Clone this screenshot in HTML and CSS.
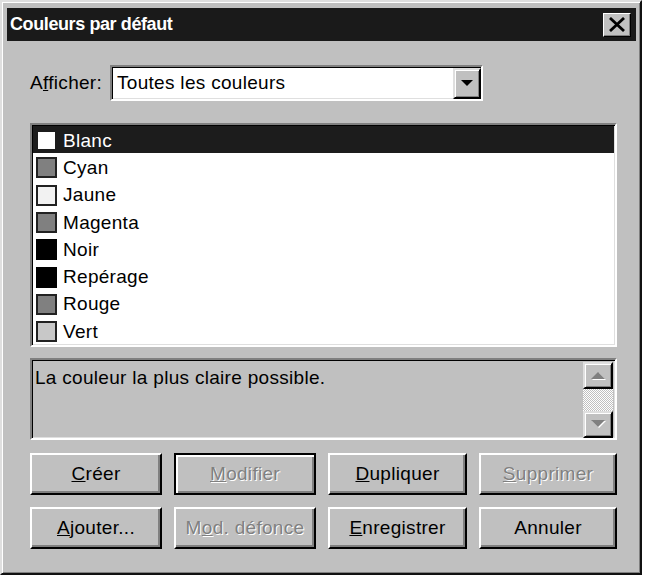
FILE: index.html
```html
<!DOCTYPE html>
<html lang="fr">
<head>
<meta charset="UTF-8">
<title>Couleurs par défaut</title>
<link rel="stylesheet" href="styles.css">
</head>
<body>

<div class="window">
    <div class="titlebar">
        <span class="title">Couleurs par défaut</span>
        <span class="close-btn">
            <svg width="18" height="15" viewBox="0 0 18 15"><path d="M2 1 L16 14 M16 1 L2 14" stroke="#000" stroke-width="2.8" fill="none"/></svg>
        </span>
    </div>

    <div class="content">
        <div class="show-row">
            <span class="label">A<u>f</u>ficher:</span>
            <div class="combo">
                <span class="combo-text">Toutes les couleurs</span>
                <span class="combo-btn">
                    <svg width="12" height="7" viewBox="0 0 12 7"><polygon points="0,0 12,0 6,6" fill="#000"/></svg>
                </span>
            </div>
        </div>

        <div class="listbox">
            <div class="item selected"><span class="swatch white"></span>Blanc</div>
            <div class="item"><span class="swatch mid"></span>Cyan</div>
            <div class="item"><span class="swatch pale"></span>Jaune</div>
            <div class="item"><span class="swatch mid"></span>Magenta</div>
            <div class="item"><span class="swatch black"></span>Noir</div>
            <div class="item"><span class="swatch black"></span>Repérage</div>
            <div class="item"><span class="swatch mid"></span>Rouge</div>
            <div class="item"><span class="swatch light"></span>Vert</div>
        </div>

        <div class="desc">
            <p class="desc-text">La couleur la plus claire possible.</p>
            <div class="scrollbar">
                <span class="scroll-btn">
                    <svg width="16" height="9" viewBox="0 0 16 9"><polygon points="1,8 15,8 8,1" fill="#fff" transform="translate(1,1)"/><polygon points="1,8 15,8 8,1" fill="#808080"/></svg>
                </span>
                <span class="scroll-track"></span>
                <span class="scroll-btn">
                    <svg width="16" height="9" viewBox="0 0 16 9"><polygon points="1,0 15,0 8,7" fill="#fff" transform="translate(1,1)"/><polygon points="1,0 15,0 8,7" fill="#808080"/></svg>
                </span>
            </div>
        </div>

        <div class="buttons">
            <button class="button"><u>C</u>réer</button>
            <button class="button default" disabled><u>M</u>odifier</button>
            <button class="button"><u>D</u>upliquer</button>
            <button class="button" disabled><u>S</u>upprimer</button>
            <button class="button"><u>A</u>jouter...</button>
            <button class="button" disabled>M<u>o</u>d. défonce</button>
            <button class="button"><u>E</u>nregistrer</button>
            <button class="button">Annuler</button>
        </div>
    </div>
</div>

</body>
</html>
```

FILE: styles.css
```css
body {
    margin: 0;
    background-color: #fff;
    font-family: 'Liberation Sans', Arial, sans-serif;
    font-size: 19px;
    letter-spacing: 0.3px;
    color: #000;
}

.window {
    width: 642px;
    height: 575px;
    box-sizing: border-box;
    background-color: #c0c0c0;
    border: 2px solid;
    border-color: #dfdfdf #111 #111 #dfdfdf;
    box-shadow: inset 1px 1px #fff, inset -1px -1px #808080;
    padding: 6px 4px 0 5px;
    display: flex;
    flex-direction: column;
}

.titlebar {
    height: 33px;
    background-color: #1a1a1a;
    display: flex;
    align-items: center;
    padding: 0 5px 0 3px;
}

.title {
    color: #fff;
    font-weight: bold;
    font-size: 18px;
    letter-spacing: -0.4px;
}

.close-btn {
    margin-left: auto;
    width: 28px;
    height: 24px;
    box-sizing: border-box;
    background-color: #c0c0c0;
    border: 1px solid;
    border-color: #fff #000 #000 #fff;
    box-shadow: inset -1px -1px #808080;
    display: flex;
    align-items: center;
    justify-content: center;
}

.content {
    padding: 0 19px 0 23px;
    display: flex;
    flex-direction: column;
}

.show-row {
    display: flex;
    align-items: center;
    margin-top: 24px;
    height: 36px;
}

.label {
    width: 80px;
}

.combo {
    width: 373px;
    height: 36px;
    box-sizing: border-box;
    background-color: #fff;
    border: 2px solid;
    border-color: #808080 #fff #fff #808080;
    box-shadow: inset 1px 1px #000, inset -1px -1px #dfdfdf;
    display: flex;
    align-items: center;
}

.combo-text {
    padding-left: 5px;
}

.combo-btn {
    margin-left: auto;
    width: 28px;
    height: 31px;
    box-sizing: border-box;
    background-color: #c0c0c0;
    border: 2px solid;
    border-color: #dfdfdf #000 #000 #dfdfdf;
    box-shadow: inset 1px 1px #fff, inset -1px -1px #808080;
    display: flex;
    align-items: center;
    justify-content: center;
}

.listbox {
    margin-top: 22px;
    height: 224px;
    box-sizing: border-box;
    background-color: #fff;
    border: 2px solid;
    border-color: #808080 #fff #fff #808080;
    box-shadow: inset 1px 1px #000, inset -1px -1px #dfdfdf;
    padding: 1px 1px 0 1px;
}

.item {
    height: 27.3px;
    display: flex;
    align-items: center;
    padding-left: 3px;
    padding-top: 2px;
    box-sizing: border-box;
}

.item.selected {
    background-color: #1c1c1c;
    color: #fff;
}

.swatch {
    width: 21px;
    height: 21px;
    box-sizing: border-box;
    border: 2px solid #222;
    margin-right: 6px;
}

.swatch.white { background-color: #fff; border-color: #1c1c1c; }
.swatch.mid { background-color: #808080; }
.swatch.pale { background-color: #f2f2f2; }
.swatch.black { background-color: #000; border-color: #000; }
.swatch.light { background-color: #c8c8c8; }

.desc {
    margin-top: 11px;
    height: 82px;
    box-sizing: border-box;
    background-color: #c0c0c0;
    border: 2px solid;
    border-color: #808080 #fff #fff #808080;
    box-shadow: inset 1px 1px #000, inset -1px -1px #dfdfdf;
    display: flex;
    padding: 2px 2px 0 3px;
}

.desc-text {
    margin: 5px 0 0;
    flex: 1;
}

.scrollbar {
    width: 30px;
    display: flex;
    flex-direction: column;
}

.scroll-btn {
    height: 27px;
    box-sizing: border-box;
    background-color: #c0c0c0;
    border: 2px solid;
    border-color: #dfdfdf #000 #000 #dfdfdf;
    box-shadow: inset 1px 1px #fff, inset -1px -1px #808080;
    display: flex;
    align-items: center;
    justify-content: center;
}

.scroll-track {
    flex: 1;
    background: repeating-conic-gradient(#fff 0 25%, #c0c0c0 0 50%) 0 0 / 2px 2px;
}

.buttons {
    margin-top: 13px;
    display: grid;
    grid-template-columns: 132px 142px 139px 1fr;
    grid-auto-rows: 42px;
    column-gap: 12px;
    row-gap: 12px;
}

.button {
    font-family: inherit;
    font-size: 19px;
    letter-spacing: 0.3px;
    color: #000;
    background-color: #c0c0c0;
    border: 2px solid;
    border-color: #fff #000 #000 #fff;
    box-shadow: inset -2px -2px #808080;
    padding: 0;
}

.button.default {
    border-color: #000;
    box-shadow: inset 2px 2px #fff, inset -2px -2px #808080;
}

.button:disabled {
    color: #808080;
    text-shadow: 1px 1px #fff;
}
```
